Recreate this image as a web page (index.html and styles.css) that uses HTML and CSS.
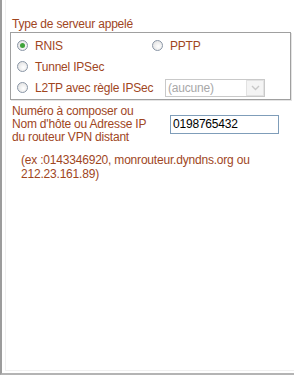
FILE: index.html
```html
<!DOCTYPE html>
<html lang="fr">
<head>
<meta charset="utf-8">
<title>Type de serveur</title>
<link rel="stylesheet" href="styles.css">
</head>
<body>
<div class="page">
 <div class="inner">
  <div class="title">Type de serveur appelé</div>
  <div class="group">
    <div class="row">
      <label class="opt"><span class="radio checked"></span>RNIS</label>
      <label class="opt"><span class="radio"></span>PPTP</label>
    </div>
    <div class="row">
      <label class="opt"><span class="radio"></span>Tunnel IPSec</label>
    </div>
    <div class="row">
      <label class="opt wide"><span class="radio"></span>L2TP avec règle IPSec</label>
      <div class="select"><span class="sel-text">(aucune)</span><span class="sel-btn"><svg width="9" height="6" viewBox="0 0 9 6"><path d="M1 1 L4.5 4.5 L8 1" fill="none" stroke="#c8c8c8" stroke-width="1.4"/></svg></span></div>
    </div>
  </div>
  <div class="field">
    <div class="label">Numéro à composer ou<br>Nom d'hôte ou Adresse IP<br>du routeur VPN distant</div>
    <div class="input">0198765432</div>
  </div>
  <div class="example">(ex :0143346920, monrouteur.dyndns.org ou 212.23.161.89)</div>
 </div>
</div>
</body>
</html>
```
FILE: styles.css
```css
html, body {
  margin: 0;
  padding: 0;
  background: #ffffff;
}
body {
  width: 294px;
  height: 375px;
  font-family: "Liberation Sans", Arial, sans-serif;
  font-size: 12px;
  letter-spacing: -0.2px;
  color: #a0461e;
}
.page {
  box-sizing: border-box;
  height: 375px;
  border-left: 2px solid #9c9c9c;
  border-bottom: 2px solid #b4b4b4;
}
.inner {
  box-sizing: border-box;
  height: 371px;
  margin-left: 3px;
  border-left: 1px solid #f0f0f0;
  border-bottom: 1px solid #f0f0f0;
  padding: 17px 0 0 4px;
}
.title {
  line-height: 14px;
  padding-left: 2px;
}
.group {
  margin-top: 1px;
  width: 281px;
  box-sizing: border-box;
  border: 1px solid #a0a0a0;
  box-shadow: inset 1px 1px 0 #ffffff, 1px 1px 0 #e4e4e4;
  padding: 2px 0 1px 6px;
}
.row {
  display: flex;
  align-items: center;
  height: 21px;
}
.opt {
  display: flex;
  align-items: center;
  width: 135px;
  flex: none;
  white-space: nowrap;
}
.opt.wide {
  width: 148px;
}
.radio {
  box-sizing: border-box;
  width: 11px;
  height: 11px;
  border-radius: 50%;
  border: 1px solid #8a96a6;
  background: radial-gradient(circle at 60% 60%, #ffffff 0%, #e6e6e6 70%, #cfcfcf 100%);
  margin-right: 7px;
  position: relative;
  flex: none;
}
.radio.checked::after {
  content: "";
  position: absolute;
  left: 2px;
  top: 2px;
  width: 5px;
  height: 5px;
  border-radius: 50%;
  background: #3fa33a;
}
.select {
  display: flex;
  align-items: stretch;
  width: 100px;
  height: 18px;
  box-sizing: border-box;
  border: 1px solid #c9c9c9;
  color: #a8a8a8;
}
.sel-text {
  flex: 1;
  padding-left: 2px;
  line-height: 16px;
}
.sel-btn {
  width: 16px;
  border: 1px solid #e2e2e2;
  background: #f4f4f4;
  display: flex;
  align-items: center;
  justify-content: center;
}
.field {
  display: flex;
  align-items: center;
  margin-top: 5px;
  padding-left: 2px;
}
.label {
  width: 158px;
  line-height: 13px;
}
.input {
  width: 109px;
  height: 19px;
  box-sizing: border-box;
  border: 1px solid #7f9db9;
  color: #000000;
  line-height: 17px;
  padding-left: 2px;
}
.example {
  margin-top: 9px;
  padding-left: 11px;
  width: 260px;
  line-height: 14px;
}
```
